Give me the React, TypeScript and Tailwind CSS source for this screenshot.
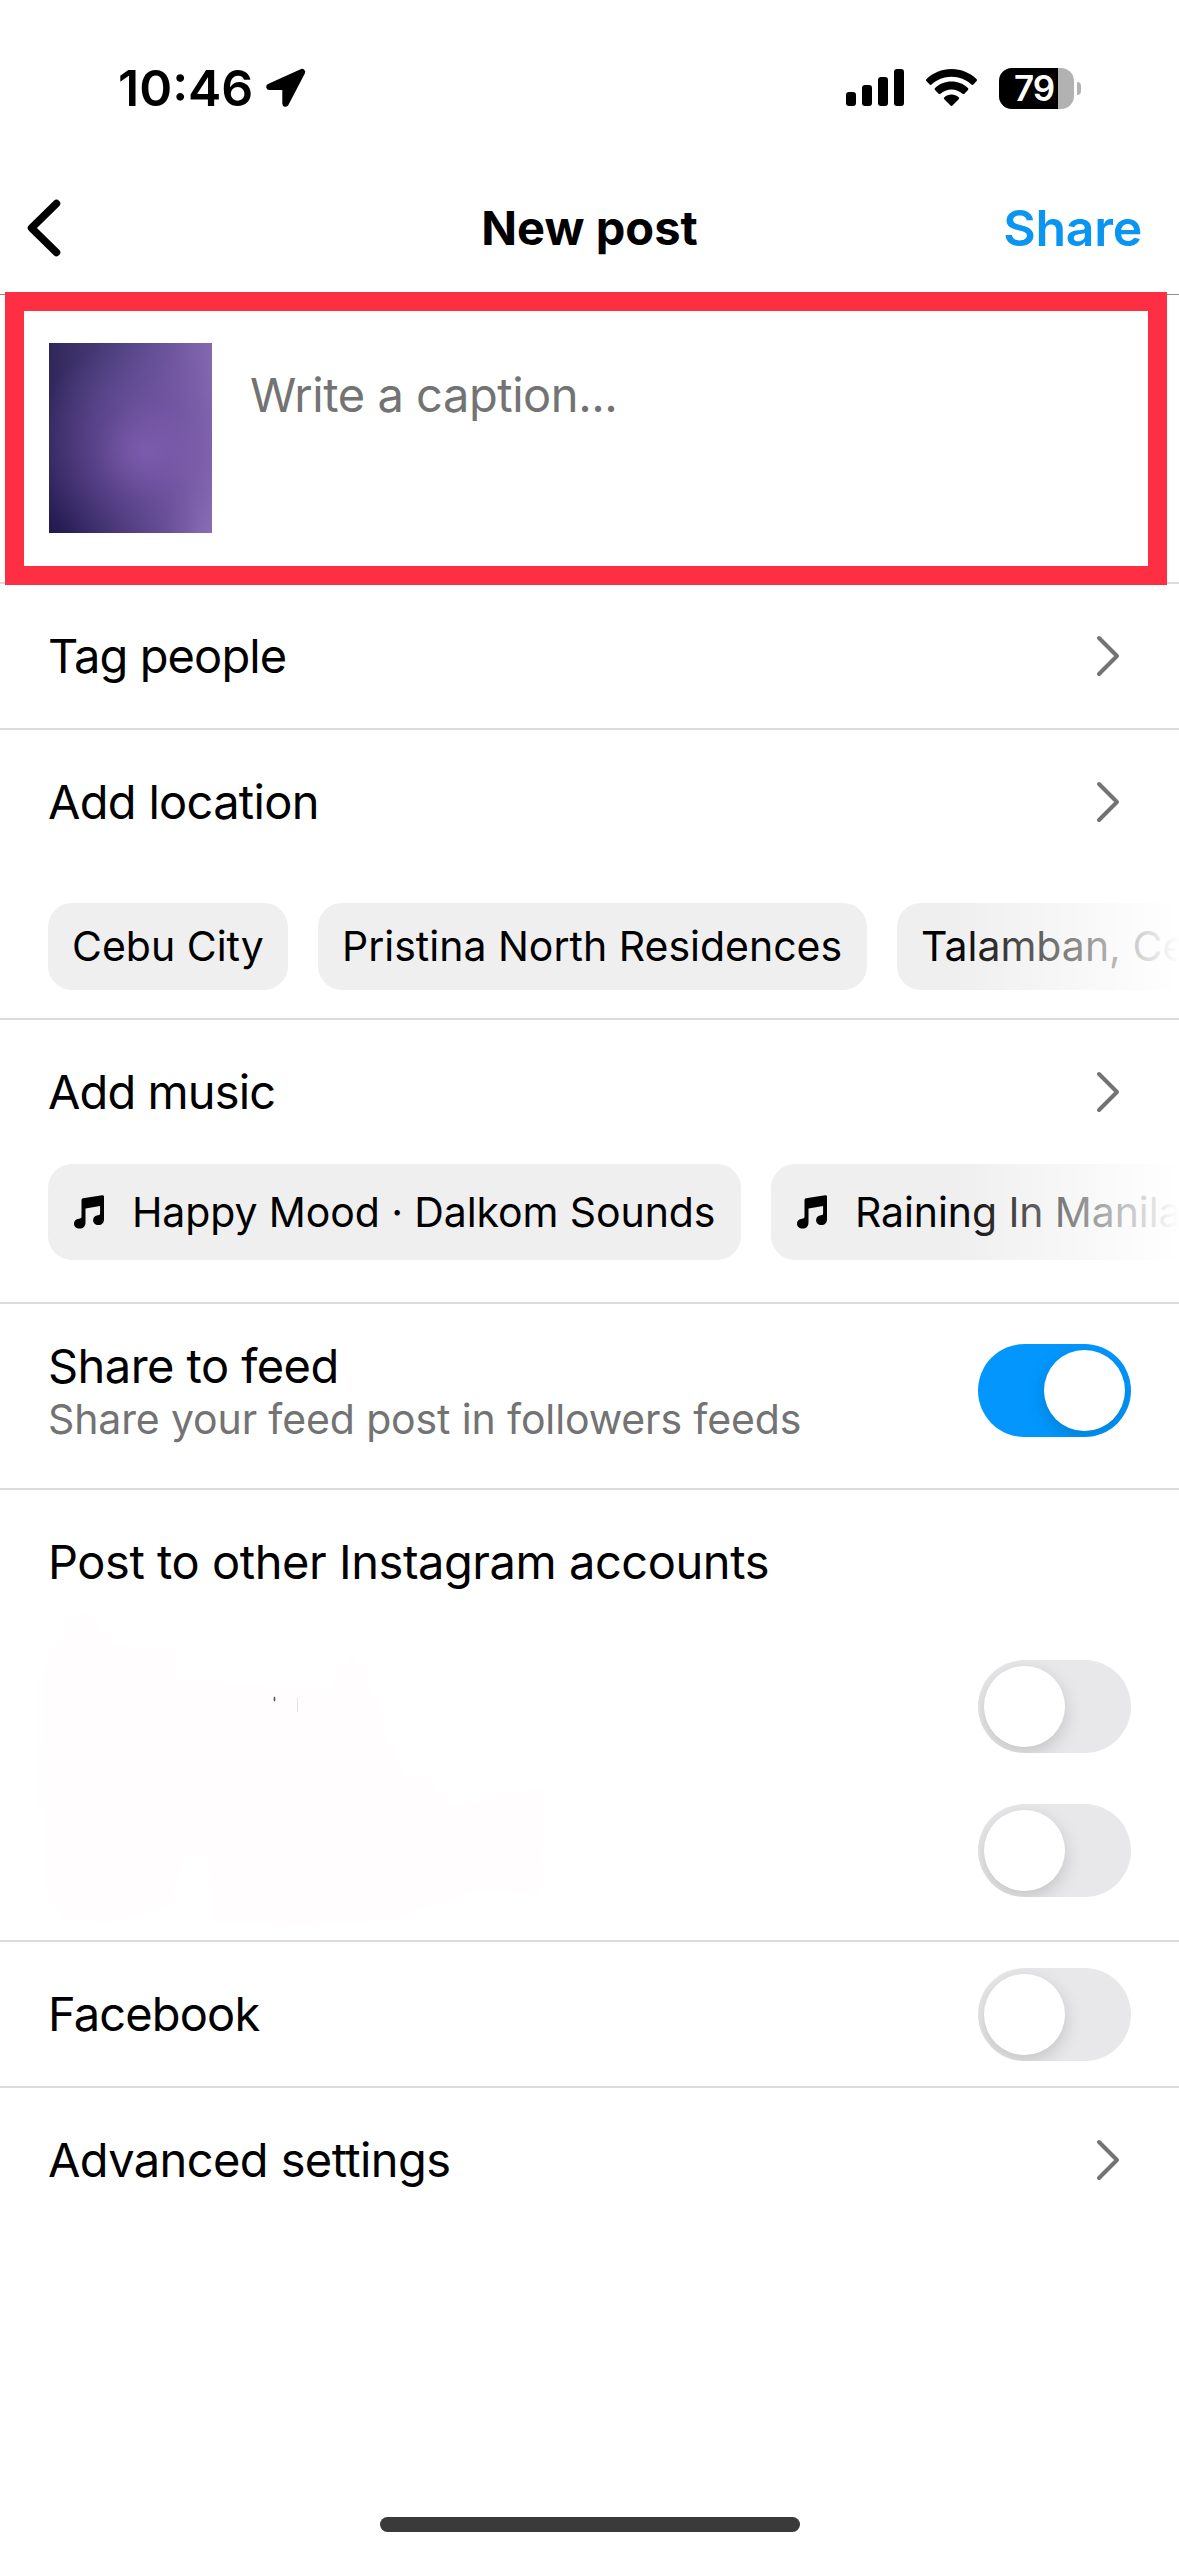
import type { ReactNode } from "react";

const locations = [
    { name: "Cebu City", box: "w-[240px]" },
    { name: "Pristina North Residences", box: "w-[549px]" },
    { name: "Talamban, Ce", box: "w-[450px]" },
];

const songs = [
    { name: "Happy Mood · Dalkom Sounds", box: "w-[693px]" },
    { name: "Raining In Manila", box: "w-[700px]" },
];

export default function App() {
    return (
        <main className="w-[1179px] h-[2556px] overflow-hidden flex flex-col bg-white text-black font-['Inter','Liberation_Sans',sans-serif]">

            <StatusBar />

            {/* HEADER */}
            <header className="h-[130px] shrink-0 border-b border-[#8e8e93] grid grid-cols-3 items-center pb-[3px]">
                <button className="pl-[27px] justify-self-start">
                    <svg width="34" height="58" viewBox="0 0 34 58" fill="none">
                        <path d="M29.5 4.5 4.5 29l25 24.5" stroke="black" strokeWidth="7.5" strokeLinecap="round" strokeLinejoin="round" />
                    </svg>
                </button>
                <h1 className="text-center text-[47px] leading-[56px] font-bold tracking-[0.05px] whitespace-nowrap">
                    New post
                </h1>
                <button className="pr-[37px] justify-self-end text-[50px] leading-[56px] font-semibold tracking-[-0.3px] text-[#0a95f0]">
                    Share
                </button>
            </header>

            {/* CAPTION */}
            <section className="relative h-[289px] shrink-0 border-b-2 border-[#dbdbdb] flex items-start pt-[48px] pl-[49px]">
                <Thumbnail />
                <p className="ml-[38px] mt-[24px] text-[47px] leading-[56px] tracking-[-0.45px] text-[#737373]">
                    Write a caption...
                </p>
                <div className="absolute -top-[3px] left-[5px] right-[12px] -bottom-[3px] border-[19px] border-[#fe2f43]" />
            </section>

            <Section>
                <LinkRow label="Tag people" spacing="tracking-[-0.9px]" />
            </Section>

            {/* LOCATION */}
            <Section>
                <LinkRow label="Add location" spacing="tracking-[-0.7px]" />
                <div className="relative mt-[29px] mb-[28px] pl-[48px] flex gap-[30px] overflow-hidden">
                    {locations.map((item) => (
                        <div
                            key={item.name}
                            className={`${item.box} h-[87px] shrink-0 rounded-[24px] bg-[#efefef] flex items-center pl-[24px] text-[41px] whitespace-nowrap`}
                        >
                            {item.name}
                        </div>
                    ))}
                    <Fade />
                </div>
            </Section>

            {/* MUSIC */}
            <Section>
                <LinkRow label="Add music" spacing="tracking-[-0.9px]" />
                <div className="relative mb-[42px] pl-[48px] flex gap-[30px] overflow-hidden">
                    {songs.map((item) => (
                        <div
                            key={item.name}
                            className={`${item.box} h-[96px] shrink-0 rounded-[24px] bg-[#efefef] flex items-center pl-[26px] text-[41px] tracking-[-0.1px] whitespace-nowrap`}
                        >
                            <MusicIcon />
                            <span className="ml-[28px] pt-[2px]">{item.name}</span>
                        </div>
                    ))}
                    <Fade />
                </div>
            </Section>

            {/* SHARE TO FEED */}
            <Section>
                <div className="h-[184px] flex justify-between items-start pl-[48px] pr-[48px]">
                    <div className="pt-[34px]">
                        <div className="text-[47px] leading-[56px] tracking-[-0.55px]">
                            Share to feed
                        </div>
                        <div className="text-[41px] leading-[50px] tracking-[-0.13px] text-[#737373]">
                            Share your feed post in followers feeds
                        </div>
                    </div>
                    <div className="pt-[40px]">
                        <Toggle on />
                    </div>
                </div>
            </Section>

            {/* OTHER ACCOUNTS */}
            <Section>
                <div className="relative pb-[18px]">
                    <Smudge />
                    <Row label="Post to other Instagram accounts" spacing="tracking-[-0.45px]" />
                    <Row>
                        <Toggle />
                    </Row>
                    <Row>
                        <Toggle />
                    </Row>
                </div>
            </Section>

            <Section>
                <Row label="Facebook" spacing="tracking-[-0.85px]">
                    <Toggle />
                </Row>
            </Section>

            <LinkRow label="Advanced settings" spacing="tracking-[-0.6px]" />

            {/* HOME INDICATOR */}
            <div className="mt-auto mb-[24px] mx-auto w-[420px] h-[15px] rounded-full bg-[#3a3a3a]" />

        </main>
    );
}

function StatusBar() {
    return (
        <div className="h-[165px] shrink-0 pt-[60px] pl-[118px] pr-[98px] flex items-start justify-between">
            <div className="flex items-center h-[56px]">
                <span className="text-[50px] leading-[56px] font-semibold tracking-[0px]">10:46</span>
                <svg width="41" height="40" viewBox="0 0 41 40" className="ml-[12px]">
                    <path
                        d="M36.2 2.6 3.6 17.4c-1.6.8-1 3.2.8 3.2h14.4v14.8c0 1.9 2.4 2.6 3.3.9L38.6 4.6c.7-1.4-.9-2.7-2.4-2Z"
                        fill="black"
                        stroke="black"
                        strokeWidth="3"
                        strokeLinejoin="round"
                    />
                </svg>
            </div>
            <div className="flex items-center h-[56px]">
                <svg width="58" height="38" viewBox="0 0 58 38" className="mr-[22px]">
                    <rect x="0" y="23" width="10" height="14" rx="3" />
                    <rect x="16" y="16" width="10" height="21" rx="3" />
                    <rect x="32" y="8" width="10" height="29" rx="3" />
                    <rect x="48" y="0" width="10" height="37" rx="3" />
                </svg>
                <svg width="51" height="38" viewBox="0 0 51 38" className="mr-[22px]">
                    <path d="M25.5 0C35.3 0 44 3.8 50.5 10.1c.6.6.6 1.4.1 2l-3.2 3.4c-.6.6-1.4.6-2 .1C40.2 10.6 33.2 7.7 25.5 7.7S10.8 10.6 5.6 15.6c-.6.5-1.4.5-2-.1L.4 12.1c-.5-.6-.5-1.4.1-2C7 3.8 15.7 0 25.5 0Z" />
                    <path d="M25.5 12.6c6.4 0 12.1 2.4 16.4 6.4.6.6.6 1.4.1 2l-3.6 3.7c-.5.5-1.3.5-1.9 0-2.9-2.7-6.8-4.3-11-4.3s-8.1 1.6-11 4.3c-.6.5-1.4.5-1.9 0L9 21c-.5-.6-.5-1.4.1-2 4.3-4 10-6.4 16.4-6.4Z" />
                    <path d="M25.5 25.6c2.7 0 5.2 1 7.1 2.6.7.6.7 1.4.1 2l-6.2 6.4c-.6.6-1.4.6-2 0l-6.2-6.4c-.6-.6-.6-1.4.1-2 1.9-1.6 4.4-2.6 7.1-2.6Z" />
                </svg>
                <div className="relative w-[75px] h-[41px] rounded-[13px] overflow-hidden bg-[#b2b2b2]">
                    <div className="w-[59px] h-[41px] bg-black" />
                    <span className="absolute left-[15px] top-0 text-[35px] leading-[41px] font-semibold tracking-[-1px] text-white">
                        79
                    </span>
                </div>
                <div className="ml-[3px] w-[4px] h-[13px] rounded-r-full bg-[#b2b2b2]" />
            </div>
        </div>
    );
}

function Thumbnail() {
    return (
        <div className="w-[163px] h-[190px] shrink-0 bg-[radial-gradient(ellipse_120px_110px_at_98px_108px,#7c5bad_0%,#7453a480_45%,#6b4f9a00_100%),radial-gradient(circle_at_0px_190px,#1f164ccc_0%,#1f164c00_60%),linear-gradient(95deg,#2f2659_0%,#4c3f7e_35%,#6f579f_70%,#8c70b6_100%)]" />
    );
}

function Section({ children }: { children: ReactNode }) {
    return <section className="shrink-0 border-b-2 border-[#dbdbdb]">{children}</section>;
}

function Row({ label, spacing, children }: { label?: string; spacing?: string; children?: ReactNode }) {
    return (
        <div className="h-[144px] shrink-0 flex items-center justify-between px-[48px]">
            <span className={`text-[47px] leading-[56px] ${spacing ?? ""}`}>{label}</span>
            {children}
        </div>
    );
}

function LinkRow({ label, spacing }: { label: string; spacing: string }) {
    return (
        <Row label={label} spacing={spacing}>
            <svg width="24" height="42" viewBox="0 0 24 42" fill="none" className="mr-[11px]">
                <path d="M3 3l18 18L3 39" stroke="#737373" strokeWidth="4" strokeLinecap="round" strokeLinejoin="round" />
            </svg>
        </Row>
    );
}

function Toggle({ on }: { on?: boolean }) {
    return (
        <div
            className={`w-[153px] h-[93px] rounded-full p-[6px] flex items-center overflow-hidden ${
                on ? "bg-[#0397fe] justify-end" : "bg-[#e8e8ea] justify-start"
            }`}
        >
            <div className="size-[81px] rounded-full bg-white shadow-[0_6px_18px_rgba(0,0,0,0.16)]" />
        </div>
    );
}

function MusicIcon() {
    return (
        <svg width="30" height="34" viewBox="0 0 30 34">
            <path d="M7.5 5.2c0-1 .6-1.7 1.5-1.9L28.2.2c1-.2 1.8.4 1.8 1.4V24c0 4-2.3 6-5.6 6-3 0-5.3-1.9-5.3-4.8 0-2.8 2-4.6 4.8-5 1.6-.2 2.200-.7 2.200-2V11L11.500 13.600v13.600c0 4.200-2.300 6.300-5.900 6.300C2.400 33.500 0 31.600 0 28.700c0-2.900 2-4.600 4.900-5 1.800-.3 2.600-.8 2.600-2.200Z" />
        </svg>
    );
}

/* Fades the clipped end of a chip list */
function Fade() {
    return <div className="absolute inset-y-0 right-0 w-[225px] bg-linear-to-r from-white/0 to-white" />;
}

/* Faint eraser marks over the hidden account names */
function Smudge() {
    return (
        <svg width="510" height="320" viewBox="0 0 510 320" className="absolute left-[40px] top-[116px]">
            <path
                d="M2 65 12 45 45 4 70 38 134 48 136 76 290 84 314 48 332 84 344 130 366 170 390 174 410 198 440 196 505 180 500 290 440 284 350 314 260 320 176 316 168 250 144 250 130 300 70 316 24 314 4 280Z"
                fill="#fffdfe"
            />
            <ellipse cx="234.5" cy="93" rx="0.9" ry="2.5" fill="#555" />
            <path d="M257.5 92v14" stroke="#e9e2e4" />
        </svg>
    );
}
